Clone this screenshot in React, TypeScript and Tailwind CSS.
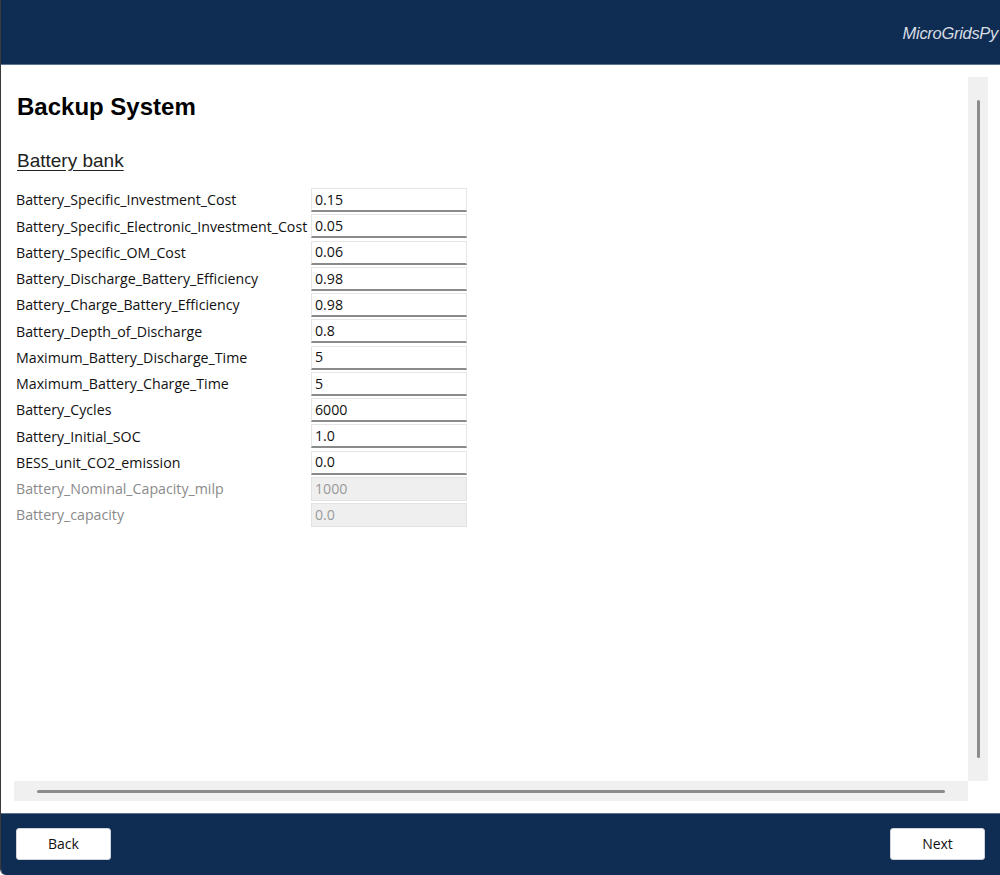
// Backup System page - battery bank parameters form inside a wizard frame
const rows: { label: string; value: string; disabled?: boolean }[] = [
  { label: "Battery_Specific_Investment_Cost", value: "0.15" },
  { label: "Battery_Specific_Electronic_Investment_Cost", value: "0.05" },
  { label: "Battery_Specific_OM_Cost", value: "0.06" },
  { label: "Battery_Discharge_Battery_Efficiency", value: "0.98" },
  { label: "Battery_Charge_Battery_Efficiency", value: "0.98" },
  { label: "Battery_Depth_of_Discharge", value: "0.8" },
  { label: "Maximum_Battery_Discharge_Time", value: "5" },
  { label: "Maximum_Battery_Charge_Time", value: "5" },
  { label: "Battery_Cycles", value: "6000" },
  { label: "Battery_Initial_SOC", value: "1.0" },
  { label: "BESS_unit_CO2_emission", value: "0.0" },
  { label: "Battery_Nominal_Capacity_milp", value: "1000", disabled: true },
  { label: "Battery_capacity", value: "0.0", disabled: true },
];

export default function App() {
  return (
    <div className="w-[1000px] h-[875px] flex flex-col bg-white border-l border-[#3a3a3a] rounded-bl-md overflow-hidden font-['Liberation_Sans',sans-serif]">
      {/* header */}
      <div className="h-[65px] shrink-0 bg-[#0f2c52] border-b border-[#5c7391] flex items-center justify-end pr-[2px] pt-[2px]">
        <span className="italic text-[#d8dde4] text-[16.5px] tracking-[-0.3px]">MicroGridsPy</span>
      </div>

      {/* body */}
      <div className="flex-1 flex flex-col pl-[13px] pt-[12px] pb-[12px] pr-[12px]">
        <div className="flex-1 flex">
          <div className="flex-1 pl-[3px] pt-[15px]">
            <h1 className="text-[24px] font-bold leading-[30px] text-black">Backup System</h1>
            <h2 className="mt-[27px] text-[19px] leading-[24px] underline underline-offset-[3px] text-[#222]">Battery bank</h2>
            <div className="mt-[15px] -ml-[1px] flex flex-col gap-[2.25px] font-['Open_Sans',sans-serif] text-[14.2px]">
              {rows.map((r) => (
                <div key={r.label} className="flex items-center h-[24px]">
                  <span className={`w-[295px] whitespace-nowrap ${r.disabled ? "text-[#8a8a8a]" : "text-[#111]"}`}>
                    {r.label}
                  </span>
                  <div
                    className={`w-[156px] h-[24px] flex items-center px-[3px] ${
                      r.disabled
                        ? "bg-[#efefef] border border-[#e2e2e2] text-[#9a9a9a]"
                        : "bg-white border border-[#e6e6e6] border-b-2 border-b-[#8a8a8a] text-[#111]"
                    }`}
                  >
                    {r.value}
                  </div>
                </div>
              ))}
            </div>
          </div>
          {/* vertical scrollbar */}
          <div className="w-[20px] bg-[#f0f0f0] flex justify-center py-[23px]">
            <div className="w-[3px] bg-[#8c8c8c] rounded-full" />
          </div>
        </div>
        {/* horizontal scrollbar */}
        <div className="flex">
          <div className="flex-1 h-[20px] bg-[#f0f0f0] flex items-center px-[23px]">
            <div className="h-[3px] w-full bg-[#8c8c8c] rounded-full" />
          </div>
          <div className="w-[20px]" />
        </div>
      </div>

      {/* footer */}
      <div className="h-[62px] shrink-0 bg-[#0f2c52] border-t border-[#5c7391] flex items-center justify-between px-[15px] pb-[2px]">
        <button className="w-[95px] h-[32px] bg-white border border-[#cfd4da] rounded-[3px] text-[14px] text-[#111] font-['Open_Sans',sans-serif]">
          Back
        </button>
        <button className="w-[95px] h-[32px] bg-white border border-[#cfd4da] rounded-[3px] text-[14px] text-[#111] font-['Open_Sans',sans-serif]">
          Next
        </button>
      </div>
    </div>
  );
}
